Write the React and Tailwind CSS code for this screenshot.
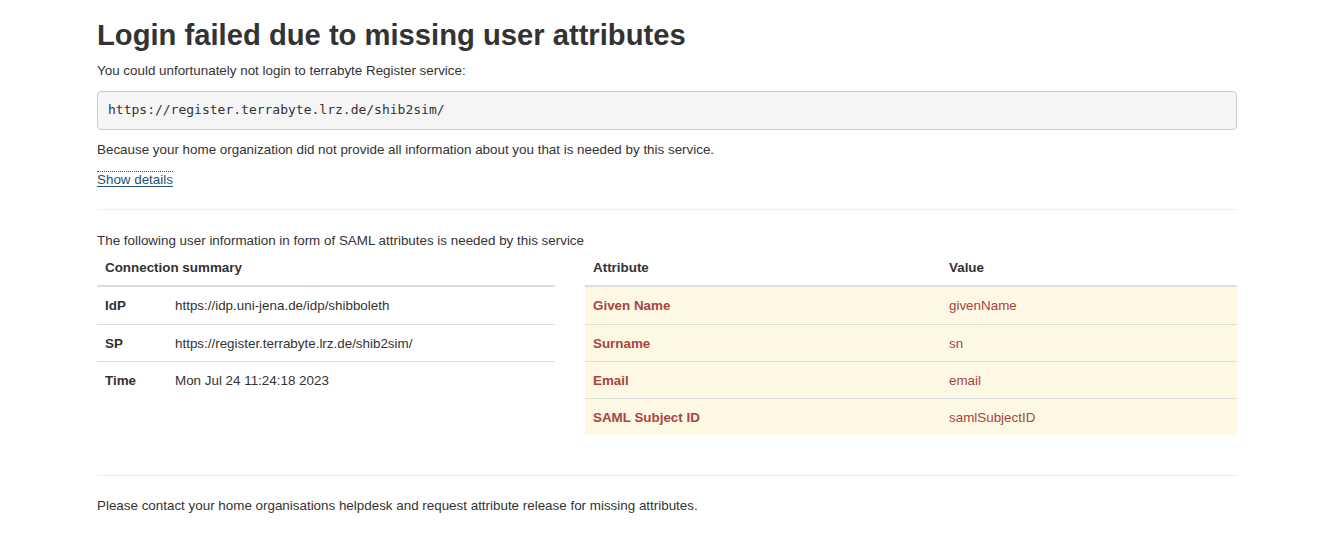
const summary = [
  ["IdP", "https://idp.uni-jena.de/idp/shibboleth"],
  ["SP", "https://register.terrabyte.lrz.de/shib2sim/"],
  ["Time", "Mon Jul 24 11:24:18 2023"],
];

const attributes = [
  ["Given Name", "givenName"],
  ["Surname", "sn"],
  ["Email", "email"],
  ["SAML Subject ID", "samlSubjectID"],
];

export default function App() {
  return (
    <div className="min-h-[542px] bg-white font-['Liberation_Sans',Arial,sans-serif] text-[13.4px] leading-[18.5px] text-[#333]">
      <div className="ml-[97px] w-[1140px] pt-[19px]">
        <h1 className="text-[29.2px] leading-[33px] font-bold text-[#333]">
          Login failed due to missing user attributes
        </h1>
        <p className="mt-[10px] mb-[10px]">
          You could unfortunately not login to terrabyte Register service:
        </p>
        <pre className="h-[39px] rounded-[4px] border border-[#ccc] bg-[#f5f5f5] px-[10px] py-[9.5px] font-['DejaVu_Sans_Mono',monospace] text-[13px] leading-[18px] text-[#333]">
          https://register.terrabyte.lrz.de/shib2sim/
        </pre>
        <p className="mt-[11px] mb-[10px]">
          Because your home organization did not provide all information about you that is needed by this service.
        </p>
        <p className="mt-[12px]">
          <a
            href="#details"
            className="border-t border-dotted border-[#23527c] text-[#23527c] underline underline-offset-[2px]"
          >
            Show details
          </a>
        </p>
        <hr className="mt-[19px] border-t border-[#eee]" />
        <p className="mt-[22px]">
          The following user information in form of SAML attributes is needed by this service
        </p>
        <div className="flex">
          <div className="w-[458px]">
            <div className="flex h-[37px] items-center border-b-2 border-[#ddd] px-2 pt-[2px] font-bold">
              Connection summary
            </div>
            {summary.map(([k, v], i) => (
              <div
                key={k}
                className={`flex h-[37px] items-center px-2 pt-[2px] ${i > 0 ? "border-t border-[#ddd]" : "h-[36px]"}`}
              >
                <span className="w-[70px] font-bold">{k}</span>
                <span>{v}</span>
              </div>
            ))}
          </div>
          <div className="ml-[30px] w-[652px]">
            <div className="flex h-[37px] items-center border-b-2 border-[#ddd] px-2 pt-[2px] font-bold">
              <span className="w-[356px]">Attribute</span>
              <span>Value</span>
            </div>
            {attributes.map(([k, v], i) => (
              <div
                key={k}
                className={`flex h-[37px] items-center bg-[#fcf8e3] px-2 pt-[2px] text-[#a94442] ${i > 0 ? "border-t border-[#ddd]" : "h-[36px]"}`}
              >
                <span className="w-[356px] font-bold">{k}</span>
                <span>{v}</span>
              </div>
            ))}
          </div>
        </div>
        <hr className="mt-[40px] border-t border-[#eee]" />
        <p className="mt-[21px]">
          Please contact your home organisations helpdesk and request attribute release for missing attributes.
        </p>
      </div>
    </div>
  );
}
